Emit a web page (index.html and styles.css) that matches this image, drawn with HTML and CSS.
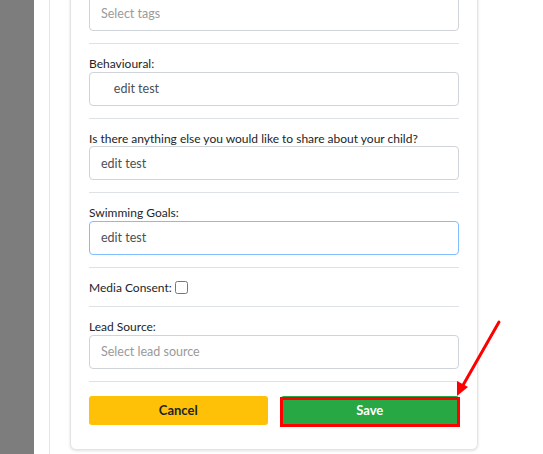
FILE: index.html
```html
<!DOCTYPE html>
<html lang="en">
<head>
    <meta charset="UTF-8">
    <meta name="viewport" content="width=device-width, initial-scale=1.0">
    <title>Edit Student</title>
    <link rel="stylesheet" href="styles.css">
</head>
<body>
    <div class="layout">
        <div class="sidebar"></div>
        <div class="main">
            <div class="content">
                <form class="card">
                    <div class="form-group first">
                        <div class="input placeholder">Select tags</div>
                    </div>
                    <div class="form-group">
                        <label class="label">Behavioural:</label>
                        <input class="input" type="text" value="    edit test">
                    </div>
                    <div class="form-group">
                        <label class="label">Is there anything else you would like to share about your child?</label>
                        <input class="input" type="text" value="edit test">
                    </div>
                    <div class="form-group">
                        <label class="label">Swimming Goals:</label>
                        <input class="input focused" type="text" value="edit test">
                    </div>
                    <div class="form-group inline">
                        <label class="label">Media Consent:</label>
                        <input class="check" type="checkbox">
                    </div>
                    <div class="form-group">
                        <label class="label">Lead Source:</label>
                        <div class="input placeholder">Select lead source</div>
                    </div>
                    <div class="actions">
                        <button type="button" class="btn btn-cancel">Cancel</button>
                        <div class="save-wrap">
                            <button type="button" class="btn btn-save">Save</button>
                            <span class="highlight"></span>
                        </div>
                    </div>
                </form>
            </div>
        </div>

        <!-- annotation arrow -->
        <svg class="arrow" width="543" height="454" viewBox="0 0 543 454">
            <line x1="499" y1="322" x2="462" y2="387" stroke="#ff0000" stroke-width="3" stroke-linecap="round"/>
            <polygon points="457,396 457,381 468,387" fill="#ff0000"/>
        </svg>
    </div>
</body>
</html>
```

FILE: styles.css
```css
* {
    box-sizing: border-box;
}

body {
    margin: 0;
    font-family: Lato, "Noto Sans", Arial, sans-serif;
    font-size: 12px;
    color: #212529;
    background: #fff;
}

.layout {
    position: relative;
    display: flex;
    height: 454px;
    overflow: hidden;
}

.sidebar {
    width: 34px;
    background: #7d7d7d;
}

.main {
    flex: 1;
    padding-left: 15px;
}

.content {
    display: flow-root;
    height: 100%;
    border-left: 1px solid #e6e6e6;
    padding-left: 20px;
}

.card {
    width: 408px;
    margin-top: -10px;
    padding: 0 18px 24px 18px;
    background: #fff;
    border: 1px solid #e4e4e4;
    border-radius: 6px;
    box-shadow: 0 1px 3px rgba(0, 0, 0, 0.12);
}

.form-group {
    padding: 12px 0;
    border-bottom: 1px solid #dee2e6;
}

.form-group.first {
    padding-top: 6px;
}

.form-group.inline {
    display: flex;
    align-items: center;
    padding: 12px 0 11px;
}

.label {
    display: block;
    line-height: 15.6px;
    font-size: 12px;
    color: #212529;
}

.inline .label {
    display: inline-block;
}

.input {
    display: block;
    width: 100%;
    height: 34px;
    padding: 0 11px;
    font-family: inherit;
    font-size: 12.5px;
    line-height: 32px;
    color: #495057;
    background: #fff;
    border: 1px solid #ced4da;
    border-radius: 4px;
    outline: none;
    white-space: pre;
}

.input.placeholder {
    color: #9a9a9a;
}

.input.focused {
    border-color: #80bdff;
}

.check {
    width: 13px;
    height: 13px;
    margin: 0 0 0 3px;
}

.actions {
    display: grid;
    grid-template-columns: 1fr 1fr;
    gap: 13px;
    padding-top: 14px;
}

.btn {
    display: block;
    width: 100%;
    height: 29px;
    font-family: inherit;
    font-size: 13px;
    font-weight: bold;
    border: none;
    border-radius: 3px;
}

.btn-cancel {
    background: #ffc107;
    color: #212529;
}

.save-wrap {
    position: relative;
}

.btn-save {
    background: #28a745;
    color: #fff;
}

.highlight {
    position: absolute;
    left: -1px;
    top: 1px;
    right: -1px;
    bottom: -2px;
    border: 3px solid #ff0000;
}

.arrow {
    position: absolute;
    left: 0;
    top: 0;
    pointer-events: none;
}
```
